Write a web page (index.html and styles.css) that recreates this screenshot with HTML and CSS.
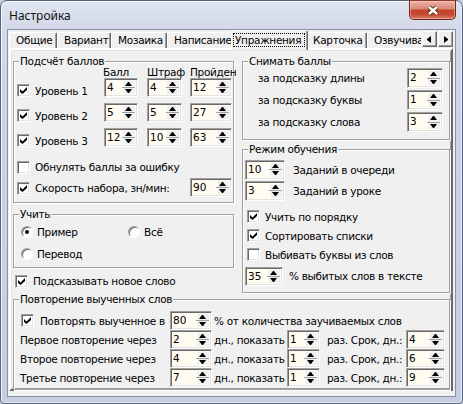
FILE: index.html
```html
<!DOCTYPE html>
<html lang="ru">
<head>
<meta charset="utf-8">
<title>Настройка</title>
<link rel="stylesheet" href="styles.css">
</head>
<body>
<div class="window">
  <div class="titlebar">
    <span class="title">Настройка</span>
    <span class="close"><svg width="14" height="11" viewBox="0 0 14 11"><path class="x-out" d="M3 2 L11 9 M11 2 L3 9"/><path class="x-in" d="M3 2 L11 9 M11 2 L3 9"/></svg></span>
  </div>
  <div class="client">
    <div class="tabs">
      <span class="tab tw48">Общие</span>
      <span class="tab tw54">Вариант</span>
      <span class="tab tw56">Мозаика</span>
      <span class="tab tw66">Написание</span>
      <span class="tab active"><span class="focus">Упражнения</span></span>
      <span class="tab tw61">Карточка</span>
      <span class="tab tw72">Озвучивание</span>
      <span class="tab-scroll"><span class="tbtn"><i class="tri-l"></i></span><span class="tbtn"><i class="tri-r"></i></span></span>
    </div>
    <div class="panel">
      <div class="cols">
        <div class="col">
          <fieldset class="group g-score">
            <legend>Подсчёт баллов</legend>
            <div class="score-grid">
              <span></span><span class="hdr hdr-first">Балл</span><span class="hdr">Штраф</span><span class="hdr">Пройден</span>
              <span class="lvl"><span class="cb"><svg class="ck" viewBox="0 0 7 7"><path d="M0 2 L2.5 4.5 L7 0 L7 3 L2.5 7 L0 5 Z"/></svg></span>Уровень 1</span>
              <span class="spin w34"><span class="v">4</span><span class="sb"><i></i><i></i></span></span>
              <span class="spin w35"><span class="v">4</span><span class="sb"><i></i><i></i></span></span>
              <span class="spin w42"><span class="v">12</span><span class="sb"><i></i><i></i></span></span>
              <span class="lvl"><span class="cb"><svg class="ck" viewBox="0 0 7 7"><path d="M0 2 L2.5 4.5 L7 0 L7 3 L2.5 7 L0 5 Z"/></svg></span>Уровень 2</span>
              <span class="spin w34"><span class="v">5</span><span class="sb"><i></i><i></i></span></span>
              <span class="spin w35"><span class="v">5</span><span class="sb"><i></i><i></i></span></span>
              <span class="spin w42"><span class="v">27</span><span class="sb"><i></i><i></i></span></span>
              <span class="lvl"><span class="cb"><svg class="ck" viewBox="0 0 7 7"><path d="M0 2 L2.5 4.5 L7 0 L7 3 L2.5 7 L0 5 Z"/></svg></span>Уровень 3</span>
              <span class="spin w34"><span class="v">12</span><span class="sb"><i></i><i></i></span></span>
              <span class="spin w35"><span class="v">10</span><span class="sb"><i></i><i></i></span></span>
              <span class="spin w42"><span class="v">63</span><span class="sb"><i></i><i></i></span></span>
            </div>
            <div class="r-reset"><span class="cb"></span>Обнулять баллы за ошибку</div>
            <div class="r-speed"><span class="cb"><svg class="ck" viewBox="0 0 7 7"><path d="M0 2 L2.5 4.5 L7 0 L7 3 L2.5 7 L0 5 Z"/></svg></span><span class="grow">Скорость набора, зн/мин:</span><span class="spin w42"><span class="v">90</span><span class="sb"><i></i><i></i></span></span></div>
          </fieldset>
          <fieldset class="group g-learn">
            <legend>Учить</legend>
            <div class="radios">
              <span class="rad"><span class="rb on"></span>Пример</span>
              <span class="rad"><span class="rb"></span>Всё</span>
              <span class="rad"><span class="rb"></span>Перевод</span>
            </div>
          </fieldset>
          <div class="r-hint"><span class="cb"><svg class="ck" viewBox="0 0 7 7"><path d="M0 2 L2.5 4.5 L7 0 L7 3 L2.5 7 L0 5 Z"/></svg></span>Подсказывать новое слово</div>
        </div>
        <div class="col">
          <fieldset class="group g-penalty">
            <legend>Снимать баллы</legend>
            <div class="pen-row"><span class="pl">за подсказку длины</span><span class="spin w36 h20"><span class="v">2</span><span class="sb"><i></i><i></i></span></span></div>
            <div class="pen-row"><span class="pl">за подсказку буквы</span><span class="spin w36 h20"><span class="v">1</span><span class="sb"><i></i><i></i></span></span></div>
            <div class="pen-row"><span class="pl">за подсказку слова</span><span class="spin w36 h20"><span class="v">3</span><span class="sb"><i></i><i></i></span></span></div>
          </fieldset>
          <fieldset class="group g-mode">
            <legend>Режим обучения</legend>
            <div class="m-spin first"><span class="spin w40 h20"><span class="v">10</span><span class="sb"><i></i><i></i></span></span>Заданий в очереди</div>
            <div class="m-spin"><span class="spin w40 h20"><span class="v">3</span><span class="sb"><i></i><i></i></span></span>Заданий в уроке</div>
            <div class="m-chk first"><span class="cb"><svg class="ck" viewBox="0 0 7 7"><path d="M0 2 L2.5 4.5 L7 0 L7 3 L2.5 7 L0 5 Z"/></svg></span>Учить по порядку</div>
            <div class="m-chk"><span class="cb"><svg class="ck" viewBox="0 0 7 7"><path d="M0 2 L2.5 4.5 L7 0 L7 3 L2.5 7 L0 5 Z"/></svg></span>Сортировать списки</div>
            <div class="m-chk"><span class="cb"></span>Выбивать буквы из слов</div>
            <div class="m-pct"><span class="spin w38"><span class="v">35</span><span class="sb"><i></i><i></i></span></span>% выбитых слов в тексте</div>
          </fieldset>
        </div>
      </div>
      <fieldset class="group g-repeat">
        <legend>Повторение выученных слов</legend>
        <div class="rep">
          <span class="r1"><span class="cb"><svg class="ck" viewBox="0 0 7 7"><path d="M0 2 L2.5 4.5 L7 0 L7 3 L2.5 7 L0 5 Z"/></svg></span>Повторять выученное в</span>
          <span class="spin w42"><span class="v">80</span><span class="sb"><i></i><i></i></span></span>
          <span class="t1 span4">% от количества заучиваемых слов</span>

          <span class="rl">Первое повторение через</span>
          <span class="spin w42"><span class="v">2</span><span class="sb"><i></i><i></i></span></span>
          <span class="t1">дн., показать</span>
          <span class="spin w33"><span class="v">1</span><span class="sb"><i></i><i></i></span></span>
          <span class="t2">раз. Срок, дн.:</span>
          <span class="spin w39"><span class="v">4</span><span class="sb"><i></i><i></i></span></span>

          <span class="rl">Второе повторение через</span>
          <span class="spin w42"><span class="v">4</span><span class="sb"><i></i><i></i></span></span>
          <span class="t1">дн., показать</span>
          <span class="spin w33"><span class="v">1</span><span class="sb"><i></i><i></i></span></span>
          <span class="t2">раз. Срок, дн.:</span>
          <span class="spin w39"><span class="v">6</span><span class="sb"><i></i><i></i></span></span>

          <span class="rl">Третье повторение через</span>
          <span class="spin w42"><span class="v">7</span><span class="sb"><i></i><i></i></span></span>
          <span class="t1">дн., показать</span>
          <span class="spin w33"><span class="v">1</span><span class="sb"><i></i><i></i></span></span>
          <span class="t2">раз. Срок, дн.:</span>
          <span class="spin w39"><span class="v">9</span><span class="sb"><i></i><i></i></span></span>
        </div>
      </fieldset>
    </div>
  </div>
</div>
</body>
</html>
```

FILE: styles.css
```css
html, body {
  margin: 0;
  padding: 0;
  overflow: hidden;
  background: #c9d1e1;
}

body {
  font: 10.5px "DejaVu Sans", Verdana, sans-serif;
  letter-spacing: -0.3px;
  color: #000;
}

.window {
  width: 463px;
  height: 404px;
  box-sizing: border-box;
  border: 1px solid #56647f;
  border-radius: 7px 7px 4px 4px;
  padding: 0 6px 6px 6px;
  display: flex;
  flex-direction: column;
  background: linear-gradient(to bottom, #dfe4f0 0, #d4d9e9 28px, #cdd3e5 120px, #c7cde0 100%);
  box-shadow: inset 1px 1px #f3f6fb, inset -1px -1px #e3e8f1;
}

/* title bar */
.titlebar {
  height: 28px;
  flex: none;
  display: flex;
  align-items: center;
}

.title {
  padding-left: 2px;
  font: 12px "Noto Sans", "Open Sans", sans-serif;
  letter-spacing: 0;
  color: #111;
}

.close {
  align-self: flex-start;
  margin-top: -1px;
  margin-left: auto;
  width: 47px;
  height: 20px;
  box-sizing: border-box;
  border: 1px solid #6c271c;
  border-top-color: #8a3a2c;
  border-radius: 0 0 5px 5px;
  background: linear-gradient(to bottom, #ecb3a5 0%, #dc8a76 42%, #c4432b 52%, #c54a32 75%, #de7d64 100%);
  box-shadow: inset 0 0 0 1px rgba(255, 220, 210, 0.45);
  display: flex;
  align-items: center;
  justify-content: center;
}

.close svg {
  display: block;
}

.x-out {
  stroke: #4b1d16;
  stroke-width: 4.2;
  fill: none;
}

.x-in {
  stroke: #fff;
  stroke-width: 2.4;
  fill: none;
}

/* client */
.client {
  width: 449px;
  height: 368px;
  box-sizing: border-box;
  border: 1px solid #8592ab;
  background: #f0f0f0;
  padding-left: 1px;
}

.tabs {
  position: relative;
  z-index: 1;
  width: 444px;
  height: 20px;
  margin-bottom: -2px;
  display: flex;
  align-items: flex-start;
  overflow: hidden;
}

.tab {
  flex: none;
  height: 16px;
  margin-top: 2px;
  box-sizing: border-box;
  padding: 0 0 0 6px;
  border: 1px solid #fff;
  border-right-color: #696969;
  border-bottom: 0;
  border-radius: 2px 2px 0 0;
  box-shadow: inset -1px 0 #a0a0a0;
  background: #f0f0f0;
  line-height: 15px;
  white-space: nowrap;
  overflow: hidden;
}

.tw48 { width: 48px; }
.tw54 { width: 54px; }
.tw56 { width: 56px; }
.tw61 { width: 61px; }
.tw66 { width: 66px; }
.tw72 { width: 72px; }

.tab.active {
  position: relative;
  z-index: 2;
  width: 77px;
  height: 20px;
  margin: 0 -2px 0 -2px;
  padding: 2px 2px 0 1px;
}

.focus {
  display: block;
  height: 14px;
  line-height: 14px;
  padding-left: 2px;
  outline: 1px dotted #000;
  outline-offset: -1px;
}

.tab-scroll {
  position: absolute;
  right: 0;
  top: 0;
  height: 18px;
  padding: 1px 0 0 1px;
  box-sizing: border-box;
  width: 32px;
  background: #f0f0f0;
  display: flex;
  gap: 1px;
  z-index: 3;
}

.tbtn {
  width: 15px;
  height: 16px;
  box-sizing: border-box;
  border: 1px solid;
  border-color: #fff #696969 #696969 #fff;
  box-shadow: inset -1px -1px #a0a0a0;
  background: #f0f0f0;
  display: flex;
  align-items: center;
  justify-content: center;
}

.tbtn i {
  display: block;
  width: 0;
  height: 1px;
  border-top: 3px solid transparent;
  border-bottom: 3px solid transparent;
}

.tri-l {
  border-right: 4px solid #000;
  margin-right: 1px;
}

.tri-r {
  border-left: 4px solid #000;
}

.panel {
  width: 444px;
  height: 343px;
  box-sizing: border-box;
  border: 2px solid;
  border-color: #fff #696969 #696969 #fff;
  box-shadow: inset 1px 1px #e3e3e3, inset -1px -1px #a0a0a0;
  padding: 5px 1px 5px 2px;
}

.cols {
  display: grid;
  grid-template-columns: 221px 1fr;
  column-gap: 8px;
}

.col {
  display: flex;
  flex-direction: column;
}

/* group boxes */
.group {
  margin: 0;
  padding: 0;
  min-width: 0;
  border: 1px solid #a0a0a0;
  box-shadow: inset 1px 1px #fff, 1px 1px #fff;
}

.group legend {
  margin-left: 5px;
  padding: 0 1px;
  line-height: 13px;
  background: #f0f0f0;
}

/* controls */
.cb {
  flex: none;
  width: 13px;
  height: 13px;
  box-sizing: border-box;
  border: 1px solid;
  border-color: #a0a0a0 #fff #fff #a0a0a0;
  box-shadow: inset 1px 1px #696969, inset -1px -1px #e3e3e3;
  background: #fff;
  display: flex;
  align-items: center;
  justify-content: center;
}

.ck {
  width: 7px;
  height: 7px;
  display: block;
  fill: #000;
}

.rb {
  flex: none;
  position: relative;
  width: 12px;
  height: 12px;
  box-sizing: border-box;
  border-radius: 50%;
  border: 1px solid;
  border-color: #a0a0a0 #fff #fff #a0a0a0;
  box-shadow: inset 1px 1px #696969;
  background: #fff;
}

.rb.on::after {
  content: "";
  position: absolute;
  left: 3px;
  top: 3px;
  width: 4px;
  height: 4px;
  border-radius: 50%;
  background: #000;
}

.spin {
  display: flex;
  box-sizing: border-box;
  height: 19px;
  padding: 2px 2px 2px 2px;
  border: 1px solid;
  border-color: #a0a0a0 #fff #fff #a0a0a0;
  box-shadow: inset 1px 1px #696969, inset -1px -1px #e3e3e3;
  background: #fffbf0;
  align-self: flex-start;
  letter-spacing: 0;
}

.spin.h20 { height: 20px; }
.w33 { width: 33px; }
.w34 { width: 34px; }
.w35 { width: 35px; }
.w36 { width: 36px; }
.w38 { width: 38px; }
.w39 { width: 39px; }
.w40 { width: 40px; }
.w42 { width: 42px; }

.spin .v {
  line-height: 13px;
}

.sb {
  width: 13px;
  margin-left: auto;
  display: flex;
  flex-direction: column;
  background: #f0f0f0;
  box-shadow: inset 1px 0 #fff;
}

.sb i {
  flex: 1;
  display: flex;
  align-items: center;
  justify-content: center;
}

.sb i:first-child {
  border-bottom: 1px solid #a0a0a0;
}

.sb i::after {
  content: "";
  display: block;
  width: 1px;
  height: 0;
  border-left: 3px solid transparent;
  border-right: 3px solid transparent;
}

.sb i:first-child::after {
  border-bottom: 4px solid #000;
}

.sb i:last-child::after {
  border-top: 4px solid #000;
}

/* Подсчёт баллов */
.g-score {
  height: 146px;
  padding-right: 1px;
}

.score-grid {
  display: grid;
  grid-template-columns: 90px 43px 43px 42px;
  grid-template-rows: 12px 25px 25px 25px;
  margin-top: -2px;
}

.hdr {
  line-height: 12px;
  white-space: nowrap;
}

.hdr-first {
  margin-left: -1px;
}

.lvl {
  height: 25px;
  display: flex;
  align-items: center;
  gap: 5px;
  padding-left: 3px;
  white-space: nowrap;
}

.score-grid .spin {
  align-self: start;
}

.r-reset {
  margin-top: 5px;
  height: 18px;
  display: flex;
  align-items: center;
  gap: 5px;
  padding-left: 3px;
}

.r-speed {
  margin-top: 2px;
  height: 20px;
  display: flex;
  align-items: center;
  gap: 5px;
  padding-left: 3px;
}

.grow {
  flex: 1;
}

/* Учить */
.g-learn {
  margin-top: 5px;
  height: 58px;
}

.radios {
  margin-top: 2px;
  padding-left: 7px;
  display: grid;
  grid-template-columns: 107px auto;
  grid-auto-rows: 18px;
  row-gap: 4px;
}

.rad {
  display: flex;
  align-items: center;
  gap: 4px;
}

.r-hint {
  margin-top: 4px;
  height: 18px;
  display: flex;
  align-items: center;
  gap: 5px;
  padding-left: 2px;
}

/* Снимать баллы */
.g-penalty {
  height: 83px;
}

.pen-row {
  height: 22px;
  padding-left: 15px;
  display: grid;
  grid-template-columns: 149px 36px;
  align-items: start;
}

.pl {
  line-height: 20px;
}

/* Режим обучения */
.g-mode {
  margin-top: 3px;
  height: 148px;
}

.m-spin {
  height: 21px;
  display: flex;
  align-items: center;
  gap: 8px;
  padding-left: 2px;
}

.m-spin .spin {
  align-self: center;
}

.m-spin.first {
  margin-top: 3px;
}

.m-chk {
  height: 19px;
  display: flex;
  align-items: center;
  gap: 5px;
  padding-left: 4px;
}

.m-chk.first {
  margin-top: 6px;
}

.m-pct {
  margin-top: 2px;
  height: 20px;
  display: flex;
  align-items: center;
  gap: 6px;
  padding-left: 2px;
}

.m-pct .spin {
  align-self: center;
}

/* Повторение */
.g-repeat {
  height: 95px;
}

.rep {
  margin-top: 5px;
  display: grid;
  grid-template-columns: 156px 42px 75px 33px 86px 39px;
  grid-auto-rows: 19px;
  align-items: center;
}

.rep .spin {
  align-self: stretch;
}

.r1 {
  display: flex;
  align-items: center;
  gap: 6px;
  padding-left: 7px;
  white-space: nowrap;
}

.rl {
  padding-left: 6px;
  white-space: nowrap;
}

.t1 {
  padding-left: 2px;
  white-space: nowrap;
}

.t2 {
  padding-left: 7px;
  white-space: nowrap;
}

.span4 {
  grid-column: span 4;
}
```
